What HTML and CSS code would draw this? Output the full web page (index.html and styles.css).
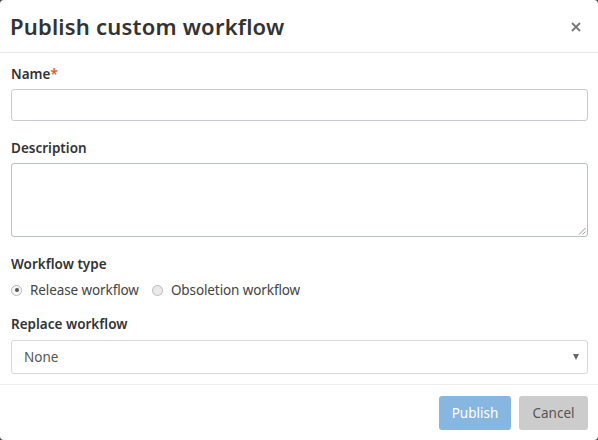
FILE: index.html
```html
<!DOCTYPE html>
<html>
<head>
<meta charset="utf-8">
<link rel="stylesheet" href="styles.css">
</head>
<body>
<div class="dialog">
  <div class="header">
    <h1 class="title">Publish custom workflow</h1>
    <svg class="close" width="10" height="10" viewBox="0 0 10 10"><path d="M1 1 L9 9 M9 1 L1 9" stroke="#777" stroke-width="1.8"/></svg>
  </div>
  <div class="body">
    <label class="label">Name<span class="req">*</span></label>
    <div class="input"></div>
    <label class="label">Description</label>
    <div class="textarea">
      <svg class="grip" width="8" height="8" viewBox="0 0 8 8"><path d="M7.5 1 L1 7.5 M7.5 4.5 L4.5 7.5" stroke="#999" stroke-width="1"/></svg>
    </div>
    <label class="label">Workflow type</label>
    <div class="radios">
      <span class="radio checked"></span><span class="rlabel">Release workflow</span>
      <span class="radio"></span><span class="rlabel">Obsoletion workflow</span>
    </div>
    <label class="label label-replace">Replace workflow</label>
    <div class="select"><span>None</span><span class="caret"></span></div>
  </div>
  <div class="footer">
    <button class="btn primary">Publish</button>
    <button class="btn secondary">Cancel</button>
  </div>
</div>
</body>
</html>
```
FILE: styles.css
```css
html, body { margin: 0; padding: 0; }
body {
  background: #444;
  font-family: "Noto Sans", "Open Sans", sans-serif;
  color: #333;
  width: 598px;
  height: 440px;
  overflow: hidden;
}
.dialog {
  background: #fff;
  width: 598px;
  height: 440px;
  border-radius: 4px;
  display: flex;
  flex-direction: column;
}
.header {
  display: flex;
  align-items: center;
  justify-content: space-between;
  height: 53px;
  border-bottom: 1px solid #e8e8e8;
  padding: 0 17px 0 10px;
  box-sizing: border-box;
}
.title {
  margin: 0;
  font-size: 22px;
  font-weight: 600;
  color: #333;
  letter-spacing: 0.2px;
}
.close { display: block; margin-top: 1px; }
.body {
  padding: 0 10px 0 11px;
  display: flex;
  flex-direction: column;
  border-bottom: 1px solid #eee;
  height: 332px;
  box-sizing: border-box;
}
.label {
  font-size: 13.5px;
  font-weight: 600;
  color: #333;
  margin-top: 12px;
  margin-bottom: 6px;
  line-height: 18px;
}
.label-replace { margin-top: 15px; margin-bottom: 7px; }
.req { color: #e5532d; }
.input {
  height: 32px;
  border: 1px solid #c8ccd2;
  border-radius: 3px;
  box-sizing: border-box;
  margin-bottom: 6px;
}
.textarea {
  height: 74px;
  border: 1px solid #b9c0c9;
  border-radius: 3px;
  box-sizing: border-box;
  position: relative;
  margin-bottom: 6px;
}
.grip { position: absolute; right: 1px; bottom: 1px; }
.radios {
  display: flex;
  align-items: center;
  font-size: 13.5px;
  color: #444;
  height: 20px;
  margin-top: 1px;
}
.radio {
  width: 11px;
  height: 11px;
  border-radius: 50%;
  border: 1px solid #bbb;
  background: #e9e9e9;
  box-sizing: border-box;
  position: relative;
  margin-right: 8px;
}
.radio.checked { background: #f5f5f5; }
.radio.checked::after {
  content: "";
  position: absolute;
  left: 2.5px; top: 2.5px;
  width: 4px; height: 4px;
  border-radius: 50%;
  background: #555;
}
.rlabel { margin-right: 13px; letter-spacing: -0.1px; }
.select {
  height: 34px;
  border: 1px solid #d5d8dc;
  border-radius: 3px;
  box-sizing: border-box;
  display: flex;
  align-items: center;
  justify-content: space-between;
  padding: 0 8px 0 12px;
  font-size: 13.5px;
  color: #555;
}
.caret {
  width: 0; height: 0;
  border-left: 3.5px solid transparent;
  border-right: 3.5px solid transparent;
  border-top: 6px solid #666;
}
.footer {
  display: flex;
  justify-content: flex-end;
  gap: 8px;
  padding: 11px 10px 0 0;
}
.btn {
  font-family: inherit;
  font-size: 13.5px;
  height: 34px;
  border: none;
  border-radius: 3px;
  padding: 0;
}
.primary { background: #87b7e0; color: #fff; width: 72px; }
.secondary { background: #ccc; color: #555; width: 69px; }
```
